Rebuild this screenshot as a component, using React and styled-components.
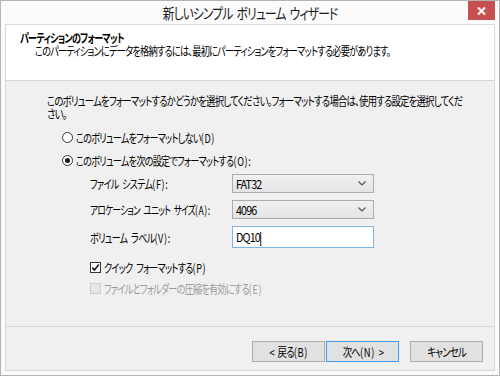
import React from 'react';
import styled, { createGlobalStyle } from 'styled-components';

const GlobalStyle = createGlobalStyle`
html, body {
  margin: 0;
  padding: 0;
  background: #ffffff;
}
body {
  font-family: 'Noto Sans CJK JP', 'Noto Sans', sans-serif;
  font-feature-settings: 'palt';
  font-size: 12px;
  color: #000000;
}
`

// Meiryo UI is narrow, so text is condensed horizontally
const T = styled.span`
display: inline-block;
white-space: nowrap;
letter-spacing: -1px;
word-spacing: 3px;
transform: scaleX(${p => p.$sx || 0.78});
transform-origin: ${p => p.$origin || 'left'} center;
`

const Line = styled(T)`
display: block;
`

// access key part, e.g. (D)
const Mn = styled.span`
letter-spacing: 0.8px;
`

const Window = styled.div`
position: relative;
box-sizing: border-box;
width: 500px;
height: 376px;
border: 1px solid #b3b3b3;
background: #fbfbfb;
padding: 0 4px 4px 4px;
display: flex;
flex-direction: column;
`

const TitleBar = styled.div`
height: 23px;
display: flex;
align-items: center;
justify-content: center;
font-size: 15px;
color: #1a1a1a;
`

const CloseButton = styled.div`
position: absolute;
top: 0;
right: 4px;
width: 27px;
height: 19px;
background: #c75050;
display: flex;
align-items: center;
justify-content: center;
`

const Client = styled.div`
flex: 1;
border: 1px solid #d9d9d9;
background: #f0f0f0;
display: flex;
flex-direction: column;
`

const Header = styled.div`
box-sizing: border-box;
height: 56px;
background: #ffffff;
border-bottom: 1px solid #d5d5d5;
padding: 6px 0 0 14px;
line-height: 13px;
`

const HeaderTitle = styled.div`
font-weight: bold;
`

const HeaderSub = styled.div`
padding-left: 15px;
`

const Body = styled.div`
flex: 1;
border-bottom: 1px solid #d5d5d5;
padding: 13px 0 0 41px;
`

const Intro = styled.div`
line-height: 13px;
`

const OptionRow = styled.label`
display: flex;
align-items: center;
height: 16px;
margin-top: ${p => p.$top}px;
margin-left: ${p => p.$indent}px;
color: ${p => (p.$disabled ? '#9c9c9c' : '#000000')};
`

const RadioCircle = styled.span`
box-sizing: border-box;
flex: none;
width: 11px;
height: 11px;
border-radius: 50%;
border: 1px solid #333333;
background: #ffffff;
margin-right: 3px;
display: flex;
align-items: center;
justify-content: center;
&::after {
  content: '';
  width: 5px;
  height: 5px;
  border-radius: 50%;
  background: ${p => (p.$checked ? '#1a1a1a' : 'transparent')};
}
`

const CheckBox = styled.span`
box-sizing: border-box;
flex: none;
width: 11px;
height: 11px;
border: 1px solid ${p => (p.$disabled ? '#cccccc' : '#333333')};
background: ${p => (p.$disabled ? '#e6e6e6' : '#ffffff')};
margin-right: 3px;
display: flex;
align-items: center;
justify-content: center;
`

const Form = styled.div`
display: grid;
grid-template-columns: 142px 142px;
grid-template-rows: 19px 19px 22px;
row-gap: 7px;
margin: 6px 0 0 43px;
align-items: center;
`

const FieldLabel = styled.div`
overflow: visible;
`

const Select = styled.div`
box-sizing: border-box;
height: 19px;
border: 1px solid #acacac;
background: linear-gradient(#f0f0f0, #e5e5e5);
display: flex;
align-items: center;
justify-content: space-between;
padding: 0 7px 0 3px;
`

const TextBox = styled.div`
box-sizing: border-box;
height: 22px;
border: 1px solid #7eb4ea;
background: #ffffff;
display: flex;
align-items: center;
padding-left: 3px;
`

const Caret = styled.span`
display: inline-block;
width: 1px;
height: 14px;
background: #000000;
margin-left: 1px;
vertical-align: middle;
`

const Footer = styled.div`
height: 43px;
display: flex;
justify-content: flex-end;
align-items: flex-start;
padding: 14px 11px 0 0;
box-sizing: border-box;
`

const Button = styled.button`
box-sizing: border-box;
width: 73px;
height: 21px;
margin-left: ${p => p.$gap}px;
border: 1px solid ${p => (p.$default ? '#3c9df3' : '#adadad')};
background: #e1e1e1;
font-family: inherit;
font-feature-settings: 'palt';
font-size: 12px;
color: #000000;
padding: 0;
display: flex;
align-items: center;
justify-content: center;
`

const Chevron = () => (
  <svg width="8" height="5" viewBox="0 0 8 5">
    <path d="M0.5 0.5 L4 4 L7.5 0.5" fill="none" stroke="#555555" strokeWidth="1.2" />
  </svg>
);

const Check = () => (
  <svg width="9" height="9" viewBox="0 0 9 9">
    <path d="M1.2 4.6 L3.5 7 L7.8 1.6" fill="none" stroke="#1a1a1a" strokeWidth="1.6" />
  </svg>
);

function App() {
  return (
    <>
      <GlobalStyle />
      <Window>
        <TitleBar><T $origin="center" $sx={0.78}>新しいシンプル ボリューム ウィザード</T></TitleBar>
        <CloseButton>
          <svg width="9" height="8" viewBox="0 0 9 8">
            <path d="M1 0.5 L8 7.5 M8 0.5 L1 7.5" stroke="#ffffff" strokeWidth="2" />
          </svg>
        </CloseButton>
        <Client>
          <Header>
            <HeaderTitle><T $sx={0.76}>パーティションのフォーマット</T></HeaderTitle>
            <HeaderSub><T $sx={0.765}>このパーティションにデータを格納するには、最初にパーティションをフォーマットする必要があります。</T></HeaderSub>
          </Header>
          <Body>
            <Intro>
              <Line>このボリュームをフォーマットするかどうかを選択してください。フォーマットする場合は、使用する設定を選択してくだ</Line>
              <Line>さい。</Line>
            </Intro>
            <OptionRow $top={9} $indent={15}>
              <RadioCircle />
              <T $sx={0.76}>このボリュームをフォーマットしない<Mn>(D)</Mn></T>
            </OptionRow>
            <OptionRow $top={7} $indent={15}>
              <RadioCircle $checked />
              <T $sx={0.76}>このボリュームを次の設定でフォーマットする<Mn>(O):</Mn></T>
            </OptionRow>
            <Form>
              <FieldLabel><T $sx={0.76}>ファイル システム<Mn>(F):</Mn></T></FieldLabel>
              <Select><T $sx={0.9}>FAT32</T><Chevron /></Select>
              <FieldLabel><T $sx={0.72}>アロケーション ユニット サイズ<Mn>(A):</Mn></T></FieldLabel>
              <Select><T $sx={0.9}>4096</T><Chevron /></Select>
              <FieldLabel><T $sx={0.76}>ボリューム ラベル<Mn>(V):</Mn></T></FieldLabel>
              <TextBox><T $sx={0.9}>DQ10<Caret /></T></TextBox>
            </Form>
            <OptionRow $top={11} $indent={43}>
              <CheckBox><Check /></CheckBox>
              <T $sx={0.76}>クイック フォーマットする<Mn>(P)</Mn></T>
            </OptionRow>
            <OptionRow $top={5} $indent={43} $disabled>
              <CheckBox $disabled />
              <T $sx={0.76}>ファイルとフォルダーの圧縮を有効にする<Mn>(E)</Mn></T>
            </OptionRow>
          </Body>
          <Footer>
            <Button $gap={0}><T $origin="center">&lt; 戻る<Mn>(B)</Mn></T></Button>
            <Button $gap={1} $default><T $origin="center">次へ<Mn>(N)</Mn> &gt;</T></Button>
            <Button $gap={11}><T $origin="center">キャンセル</T></Button>
          </Footer>
        </Client>
      </Window>
    </>
  );
}

export default App;
